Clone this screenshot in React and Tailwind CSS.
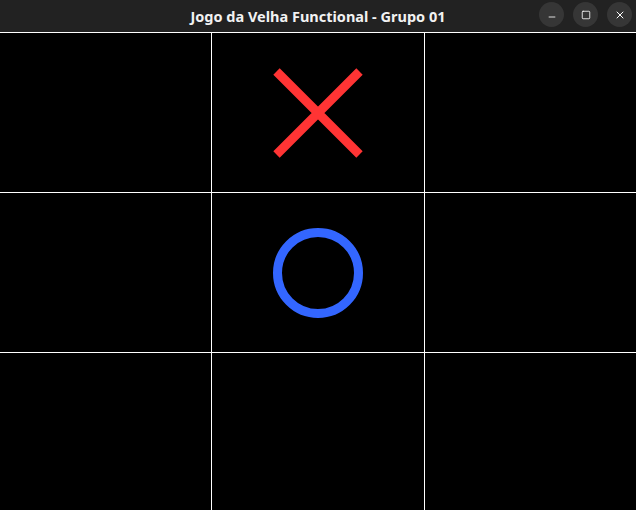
import { Minus, Square, X } from 'lucide-react';

const board = [
  [null, 'X', null],
  [null, 'O', null],
  [null, null, null],
];

const Cross = () => (
  <svg width="90" height="90" viewBox="0 0 90 90">
    <path d="M3.5 3.5L86.5 86.5M86.5 3.5L3.5 86.5" stroke="#ff3434" strokeWidth="9" strokeLinecap="butt" fill="none" />
  </svg>
);

const Circle = () => (
  <svg width="90" height="90" viewBox="0 0 90 90">
    <circle cx="45" cy="45" r="40.5" stroke="#3366ff" strokeWidth="9" fill="none" />
  </svg>
);

const App = () => {
  return (
    <div className="w-[636px] h-[510px] flex flex-col bg-black overflow-hidden" style={{ fontFamily: '"Noto Sans", "DejaVu Sans", sans-serif' }}>
      {/* Title bar */}
      <div className="h-8 flex-shrink-0 bg-[#222222] flex items-center relative">
        <span className="flex-1 text-center text-[14.5px] font-bold text-[#f2f2f2] leading-none">
          Jogo da Velha Functional - Grupo 01
        </span>
        <div className="absolute right-[4px] top-[2px] flex gap-[9px]">
          <button className="w-[25px] h-[25px] rounded-full bg-[#363636] flex items-center justify-center text-white">
            <Minus size={10} strokeWidth={2} className="translate-y-[2px]" />
          </button>
          <button className="w-[25px] h-[25px] rounded-full bg-[#363636] flex items-center justify-center text-white">
            <Square size={10} strokeWidth={2} />
          </button>
          <button className="w-[25px] h-[25px] rounded-full bg-[#363636] flex items-center justify-center text-white">
            <X size={12} strokeWidth={2} />
          </button>
        </div>
      </div>

      {/* Board */}
      <div className="flex-1 border-t border-white bg-white grid grid-cols-[211px_212px_211px] grid-rows-[159px_159px_157px] gap-px">
        {board.flat().map((cell, i) => (
          <div key={i} className="bg-black flex items-center justify-center">
            {cell === 'X' && <Cross />}
            {cell === 'O' && <Circle />}
          </div>
        ))}
      </div>
    </div>
  );
};

export default App;
